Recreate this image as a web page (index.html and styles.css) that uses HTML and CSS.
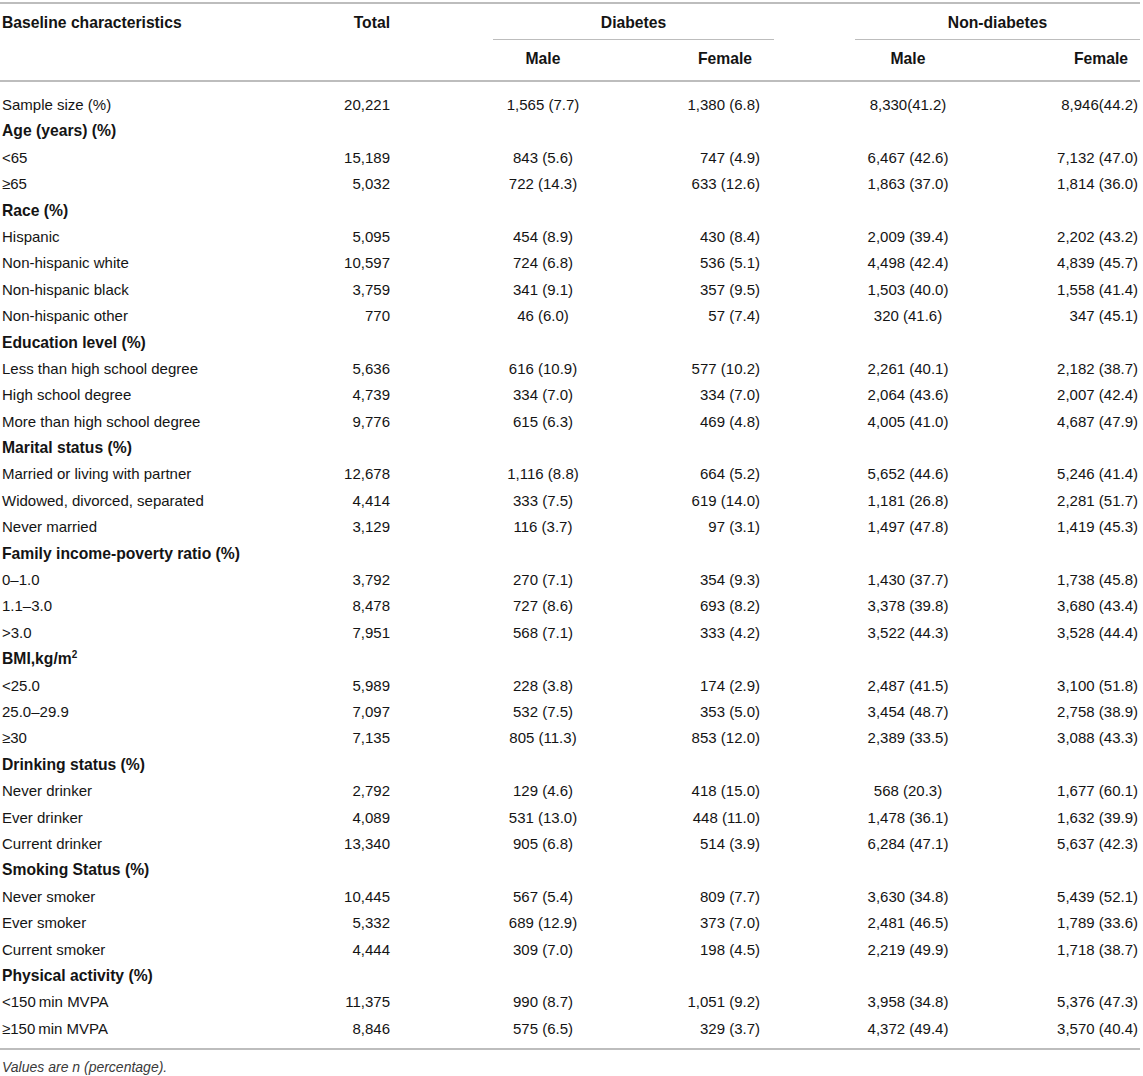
FILE: index.html
```html
<!DOCTYPE html>
<html lang="en">
<head>
<meta charset="utf-8">
<title>Baseline characteristics</title>
<link rel="stylesheet" href="styles.css">
</head>
<body>
<table class="tbl">
  <colgroup>
    <col class="c-label"><col class="c-total"><col class="c-dm"><col class="c-df"><col class="c-nm"><col class="c-nf">
  </colgroup>
  <thead>
    <tr class="h1">
      <th rowspan="2" class="lbl">Baseline characteristics</th>
      <th rowspan="2" class="tot">Total</th>
      <th colspan="2" class="grp"><div class="grp-d">Diabetes</div></th>
      <th colspan="2" class="grp"><div class="grp-n">Non-diabetes</div></th>
    </tr>
    <tr class="h2">
      <th class="m">Male</th>
      <th class="f f-d">Female</th>
      <th class="m">Male</th>
      <th class="f f-n">Female</th>
    </tr>
  </thead>
  <tbody>
    <tr><td class="lbl">Sample size (%)</td><td class="tot">20,221</td><td class="m">1,565 (7.7)</td><td class="f fd">1,380 (6.8)</td><td class="m">8,330(41.2)</td><td class="f fn">8,946(44.2)</td></tr>
    <tr class="sec"><td class="lbl">Age (years) (%)</td><td></td><td></td><td></td><td></td><td></td></tr>
    <tr><td class="lbl">&lt;65</td><td class="tot">15,189</td><td class="m">843 (5.6)</td><td class="f fd">747 (4.9)</td><td class="m">6,467 (42.6)</td><td class="f fn">7,132 (47.0)</td></tr>
    <tr><td class="lbl">≥65</td><td class="tot">5,032</td><td class="m">722 (14.3)</td><td class="f fd">633 (12.6)</td><td class="m">1,863 (37.0)</td><td class="f fn">1,814 (36.0)</td></tr>
    <tr class="sec"><td class="lbl">Race (%)</td><td></td><td></td><td></td><td></td><td></td></tr>
    <tr><td class="lbl">Hispanic</td><td class="tot">5,095</td><td class="m">454 (8.9)</td><td class="f fd">430 (8.4)</td><td class="m">2,009 (39.4)</td><td class="f fn">2,202 (43.2)</td></tr>
    <tr><td class="lbl">Non-hispanic white</td><td class="tot">10,597</td><td class="m">724 (6.8)</td><td class="f fd">536 (5.1)</td><td class="m">4,498 (42.4)</td><td class="f fn">4,839 (45.7)</td></tr>
    <tr><td class="lbl">Non-hispanic black</td><td class="tot">3,759</td><td class="m">341 (9.1)</td><td class="f fd">357 (9.5)</td><td class="m">1,503 (40.0)</td><td class="f fn">1,558 (41.4)</td></tr>
    <tr><td class="lbl">Non-hispanic other</td><td class="tot">770</td><td class="m">46 (6.0)</td><td class="f fd">57 (7.4)</td><td class="m">320 (41.6)</td><td class="f fn">347 (45.1)</td></tr>
    <tr class="sec"><td class="lbl">Education level (%)</td><td></td><td></td><td></td><td></td><td></td></tr>
    <tr><td class="lbl">Less than high school degree</td><td class="tot">5,636</td><td class="m">616 (10.9)</td><td class="f fd">577 (10.2)</td><td class="m">2,261 (40.1)</td><td class="f fn">2,182 (38.7)</td></tr>
    <tr><td class="lbl">High school degree</td><td class="tot">4,739</td><td class="m">334 (7.0)</td><td class="f fd">334 (7.0)</td><td class="m">2,064 (43.6)</td><td class="f fn">2,007 (42.4)</td></tr>
    <tr><td class="lbl">More than high school degree</td><td class="tot">9,776</td><td class="m">615 (6.3)</td><td class="f fd">469 (4.8)</td><td class="m">4,005 (41.0)</td><td class="f fn">4,687 (47.9)</td></tr>
    <tr class="sec"><td class="lbl">Marital status (%)</td><td></td><td></td><td></td><td></td><td></td></tr>
    <tr><td class="lbl">Married or living with partner</td><td class="tot">12,678</td><td class="m">1,116 (8.8)</td><td class="f fd">664 (5.2)</td><td class="m">5,652 (44.6)</td><td class="f fn">5,246 (41.4)</td></tr>
    <tr><td class="lbl">Widowed, divorced, separated</td><td class="tot">4,414</td><td class="m">333 (7.5)</td><td class="f fd">619 (14.0)</td><td class="m">1,181 (26.8)</td><td class="f fn">2,281 (51.7)</td></tr>
    <tr><td class="lbl">Never married</td><td class="tot">3,129</td><td class="m">116 (3.7)</td><td class="f fd">97 (3.1)</td><td class="m">1,497 (47.8)</td><td class="f fn">1,419 (45.3)</td></tr>
    <tr class="sec"><td class="lbl">Family income-poverty ratio (%)</td><td></td><td></td><td></td><td></td><td></td></tr>
    <tr><td class="lbl">0–1.0</td><td class="tot">3,792</td><td class="m">270 (7.1)</td><td class="f fd">354 (9.3)</td><td class="m">1,430 (37.7)</td><td class="f fn">1,738 (45.8)</td></tr>
    <tr><td class="lbl">1.1–3.0</td><td class="tot">8,478</td><td class="m">727 (8.6)</td><td class="f fd">693 (8.2)</td><td class="m">3,378 (39.8)</td><td class="f fn">3,680 (43.4)</td></tr>
    <tr><td class="lbl">&gt;3.0</td><td class="tot">7,951</td><td class="m">568 (7.1)</td><td class="f fd">333 (4.2)</td><td class="m">3,522 (44.3)</td><td class="f fn">3,528 (44.4)</td></tr>
    <tr class="sec"><td class="lbl">BMI,kg/m<sup>2</sup></td><td></td><td></td><td></td><td></td><td></td></tr>
    <tr><td class="lbl">&lt;25.0</td><td class="tot">5,989</td><td class="m">228 (3.8)</td><td class="f fd">174 (2.9)</td><td class="m">2,487 (41.5)</td><td class="f fn">3,100 (51.8)</td></tr>
    <tr><td class="lbl">25.0–29.9</td><td class="tot">7,097</td><td class="m">532 (7.5)</td><td class="f fd">353 (5.0)</td><td class="m">3,454 (48.7)</td><td class="f fn">2,758 (38.9)</td></tr>
    <tr><td class="lbl">≥30</td><td class="tot">7,135</td><td class="m">805 (11.3)</td><td class="f fd">853 (12.0)</td><td class="m">2,389 (33.5)</td><td class="f fn">3,088 (43.3)</td></tr>
    <tr class="sec"><td class="lbl">Drinking status (%)</td><td></td><td></td><td></td><td></td><td></td></tr>
    <tr><td class="lbl">Never drinker</td><td class="tot">2,792</td><td class="m">129 (4.6)</td><td class="f fd">418 (15.0)</td><td class="m">568 (20.3)</td><td class="f fn">1,677 (60.1)</td></tr>
    <tr><td class="lbl">Ever drinker</td><td class="tot">4,089</td><td class="m">531 (13.0)</td><td class="f fd">448 (11.0)</td><td class="m">1,478 (36.1)</td><td class="f fn">1,632 (39.9)</td></tr>
    <tr><td class="lbl">Current drinker</td><td class="tot">13,340</td><td class="m">905 (6.8)</td><td class="f fd">514 (3.9)</td><td class="m">6,284 (47.1)</td><td class="f fn">5,637 (42.3)</td></tr>
    <tr class="sec"><td class="lbl">Smoking Status (%)</td><td></td><td></td><td></td><td></td><td></td></tr>
    <tr><td class="lbl">Never smoker</td><td class="tot">10,445</td><td class="m">567 (5.4)</td><td class="f fd">809 (7.7)</td><td class="m">3,630 (34.8)</td><td class="f fn">5,439 (52.1)</td></tr>
    <tr><td class="lbl">Ever smoker</td><td class="tot">5,332</td><td class="m">689 (12.9)</td><td class="f fd">373 (7.0)</td><td class="m">2,481 (46.5)</td><td class="f fn">1,789 (33.6)</td></tr>
    <tr><td class="lbl">Current smoker</td><td class="tot">4,444</td><td class="m">309 (7.0)</td><td class="f fd">198 (4.5)</td><td class="m">2,219 (49.9)</td><td class="f fn">1,718 (38.7)</td></tr>
    <tr class="sec"><td class="lbl">Physical activity (%)</td><td></td><td></td><td></td><td></td><td></td></tr>
    <tr><td class="lbl">&lt;150&#8201;min MVPA</td><td class="tot">11,375</td><td class="m">990 (8.7)</td><td class="f fd">1,051 (9.2)</td><td class="m">3,958 (34.8)</td><td class="f fn">5,376 (47.3)</td></tr>
    <tr><td class="lbl">≥150&#8201;min MVPA</td><td class="tot">8,846</td><td class="m">575 (6.5)</td><td class="f fd">329 (3.7)</td><td class="m">4,372 (49.4)</td><td class="f fn">3,570 (40.4)</td></tr>
  </tbody>
</table>
<p class="note">Values are n (percentage).</p>
</body>
</html>
```

FILE: styles.css
```css
html, body {
  margin: 0;
  padding: 0;
  background: #ffffff;
}

body {
  font-family: "Liberation Sans", Arial, Helvetica, sans-serif;
  color: #141414;
  padding-top: 2px;
}

.tbl {
  width: 1140px;
  table-layout: fixed;
  border-collapse: separate;
  border-spacing: 0;
  border-top: 2px solid #bdbdbd;
  border-bottom: 2px solid #bdbdbd;
  font-size: 15px;
}

.c-label { width: 300px; }
.c-total { width: 100px; }
.c-dm { width: 286px; }
.c-df { width: 88px; }
.c-nm { width: 268px; }
.c-nf { width: 98px; }

th, td {
  padding: 4px 0 4.4px 0;
  line-height: 18px;
  white-space: nowrap;
}

th {
  font-weight: bold;
  font-size: 15.7px;
}

.lbl {
  text-align: left;
  padding-left: 2px;
}

.tot {
  text-align: right;
  padding-right: 10px;
}

.m {
  text-align: center;
}

.f {
  text-align: right;
}

.fd { padding-right: 14px; }
.fn { padding-right: 2px; }

/* header */
thead .h1 th {
  padding-top: 10px;
  padding-bottom: 0;
  vertical-align: top;
}

thead .h1 th[rowspan] {
  border-bottom: 2px solid #bdbdbd;
}

thead .grp {
  text-align: center;
}

.grp-d,
.grp-n {
  padding-bottom: 7px;
  border-bottom: 1px solid #bdbdbd;
}

.grp-d { margin-left: 93px; }
.grp-n { margin-left: 81px; }

thead .h2 th {
  padding-top: 10px;
  padding-bottom: 12px;
  border-bottom: 2px solid #bdbdbd;
}

thead .h2 .f-d { padding-right: 22px; }
thead .h2 .f-n { padding-right: 12px; }

/* body */
tbody tr:first-child td {
  padding-top: 14px;
}

tbody tr:last-child td {
  padding-bottom: 10.4px;
}

.sec .lbl {
  font-weight: bold;
  font-size: 15.7px;
}

sup {
  font-size: 10px;
  line-height: 0;
  vertical-align: 6px;
}

.note {
  margin: 8px 0 0 2px;
  font-size: 14px;
  line-height: 18px;
  font-style: italic;
  color: #3a3a3a;
}
```
